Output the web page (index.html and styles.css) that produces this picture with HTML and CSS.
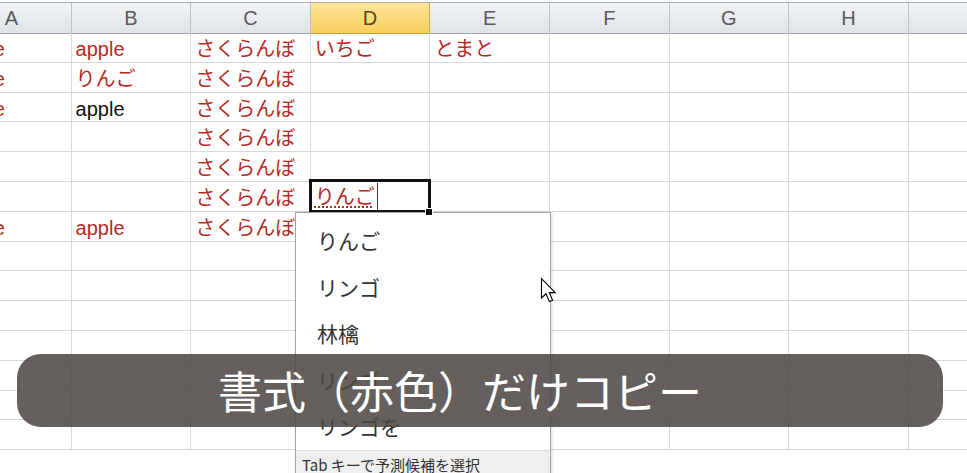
FILE: index.html
```html
<!DOCTYPE html>
<html lang="ja">
<head>
<meta charset="utf-8">
<title>Excel</title>
<link rel="stylesheet" href="styles.css">
</head>
<body>
<div class="screen">
  <div class="sheet">
    <div class="row head">
      <div class="hc">A</div><div class="hc">B</div><div class="hc">C</div><div class="hc sel">D</div><div class="hc">E</div><div class="hc">F</div><div class="hc">G</div><div class="hc">H</div><div class="hc"></div>
    </div>
    <div class="row">
      <div class="c red">apple</div><div class="c red">apple</div><div class="c red">さくらんぼ</div><div class="c red">いちご</div><div class="c red">とまと</div><div class="c"></div><div class="c"></div><div class="c"></div><div class="c"></div>
    </div>
    <div class="row">
      <div class="c red">apple</div><div class="c red">りんご</div><div class="c red">さくらんぼ</div><div class="c"></div><div class="c"></div><div class="c"></div><div class="c"></div><div class="c"></div><div class="c"></div>
    </div>
    <div class="row">
      <div class="c red">apple</div><div class="c">apple</div><div class="c red">さくらんぼ</div><div class="c"></div><div class="c"></div><div class="c"></div><div class="c"></div><div class="c"></div><div class="c"></div>
    </div>
    <div class="row">
      <div class="c"></div><div class="c"></div><div class="c red">さくらんぼ</div><div class="c"></div><div class="c"></div><div class="c"></div><div class="c"></div><div class="c"></div><div class="c"></div>
    </div>
    <div class="row">
      <div class="c"></div><div class="c"></div><div class="c red">さくらんぼ</div><div class="c"></div><div class="c"></div><div class="c"></div><div class="c"></div><div class="c"></div><div class="c"></div>
    </div>
    <div class="row">
      <div class="c"></div><div class="c"></div><div class="c red">さくらんぼ</div><div class="c active red"><span class="ime">りんご</span><span class="handle"></span></div><div class="c"></div><div class="c"></div><div class="c"></div><div class="c"></div><div class="c"></div>
    </div>
    <div class="row">
      <div class="c red">apple</div><div class="c red">apple</div><div class="c red">さくらんぼ</div><div class="c"></div><div class="c"></div><div class="c"></div><div class="c"></div><div class="c"></div><div class="c"></div>
    </div>
    <div class="row"><div class="c"></div><div class="c"></div><div class="c"></div><div class="c"></div><div class="c"></div><div class="c"></div><div class="c"></div><div class="c"></div><div class="c"></div></div>
    <div class="row"><div class="c"></div><div class="c"></div><div class="c"></div><div class="c"></div><div class="c"></div><div class="c"></div><div class="c"></div><div class="c"></div><div class="c"></div></div>
    <div class="row"><div class="c"></div><div class="c"></div><div class="c"></div><div class="c"></div><div class="c"></div><div class="c"></div><div class="c"></div><div class="c"></div><div class="c"></div></div>
    <div class="row"><div class="c"></div><div class="c"></div><div class="c"></div><div class="c"></div><div class="c"></div><div class="c"></div><div class="c"></div><div class="c"></div><div class="c"></div></div>
    <div class="row"><div class="c"></div><div class="c"></div><div class="c"></div><div class="c"></div><div class="c"></div><div class="c"></div><div class="c"></div><div class="c"></div><div class="c"></div></div>
    <div class="row"><div class="c"></div><div class="c"></div><div class="c"></div><div class="c"></div><div class="c"></div><div class="c"></div><div class="c"></div><div class="c"></div><div class="c"></div></div>
    <div class="row"><div class="c"></div><div class="c"></div><div class="c"></div><div class="c"></div><div class="c"></div><div class="c"></div><div class="c"></div><div class="c"></div><div class="c"></div></div>
  </div>

  <div class="ime-list">
    <div class="cand">りんご</div>
    <div class="cand">リンゴ</div>
    <div class="cand">林檎</div>
    <div class="cand">リンゴ</div>
    <div class="cand">リンゴを</div>
    <div class="ime-foot">Tab キーで予測候補を選択</div>
  </div>

  <svg class="pointer" width="17" height="27" viewBox="0 0 17 27" aria-hidden="true">
    <path d="M1.5 1.5 L1.5 21 L6 16.8 L9.4 24.6 L12.6 23.2 L9.3 15.6 L15.2 15.6 Z" fill="#ffffff" stroke="#000000" stroke-width="1.1" stroke-linejoin="miter"/>
  </svg>

  <div class="caption">書式（赤色）だけコピー</div>
</div>
</body>
</html>
```

FILE: styles.css
```css
html, body {
  margin: 0;
  padding: 0;
  background: #ffffff;
}

.screen {
  position: relative;
  width: 967px;
  height: 473px;
  overflow: hidden;
  background: #ffffff;
}

.sheet {
  margin-top: 2px;
  margin-left: -48px;
  border-top: 1px solid #a9b0b8;
  font-family: "Liberation Sans", "Noto Sans CJK JP", sans-serif;
}

.row {
  display: grid;
  grid-template-columns: repeat(9, 119.6px);
  height: 29.8px;
}

.head {
  height: 30px;
}

.hc {
  box-sizing: border-box;
  border-right: 1px solid #bcc2ca;
  border-bottom: 1px solid #a1a8b1;
  background: linear-gradient(#f1f3f5, #dfe3e8);
  color: #5a5a5a;
  font-size: 20px;
  line-height: 30px;
  text-align: center;
}

.hc.sel {
  background: linear-gradient(#fde49a, #f8cf5c);
  border-right-color: #d0ab4c;
  border-bottom-color: #c89c35;
  color: #5a4718;
}

.c {
  box-sizing: border-box;
  border-right: 1px solid #d9d9d9;
  border-bottom: 1px solid #d9d9d9;
  padding: 3px 0 0 4px;
  font-size: 20px;
  line-height: 26px;
  color: #111111;
  white-space: nowrap;
  overflow: hidden;
}

.c.red {
  color: #b82a22;
}

.c.active {
  position: relative;
  overflow: visible;
  padding: 1px 0 0 2px;
}

.c.active::after {
  content: "";
  position: absolute;
  left: -2px;
  top: -3px;
  right: -2px;
  bottom: -2px;
  border: 3px solid #111111;
  pointer-events: none;
}

.ime {
  display: inline-block;
  height: 27px;
  line-height: 28px;
  padding: 0 2px;
  border-right: 1px solid #333333;
  text-decoration: underline dotted #b82a22;
  text-underline-offset: 3px;
}

.handle {
  position: absolute;
  right: -4px;
  bottom: -5px;
  width: 6px;
  height: 6px;
  background: #111111;
  border: 1px solid #ffffff;
  z-index: 2;
}

.ime-list {
  position: absolute;
  left: 295px;
  top: 212px;
  width: 256px;
  height: 280px;
  box-sizing: border-box;
  border: 1px solid #a3a3a3;
  background: #ffffff;
  box-shadow: 1px 1px 3px rgba(0, 0, 0, 0.15);
  padding-top: 4px;
  font-family: "Noto Sans CJK JP", sans-serif;
}

.cand {
  height: 46.6px;
  line-height: 46px;
  padding-left: 21px;
  font-size: 21px;
  color: #333333;
}

.ime-foot {
  height: 40px;
  border-top: 1px solid #dddddd;
  background: #efefef;
  padding-left: 6px;
  font-size: 15px;
  line-height: 27px;
  color: #333333;
}

.pointer {
  position: absolute;
  left: 540px;
  top: 277px;
}

.caption {
  position: absolute;
  left: 17px;
  top: 354px;
  width: 926px;
  height: 73px;
  box-sizing: border-box;
  border-radius: 24px;
  background: rgba(76, 70, 66, 0.86);
  color: #ffffff;
  font-family: "Noto Sans CJK JP", sans-serif;
  font-size: 44px;
  line-height: 73px;
  text-align: center;
  padding-right: 40px;
}
```
